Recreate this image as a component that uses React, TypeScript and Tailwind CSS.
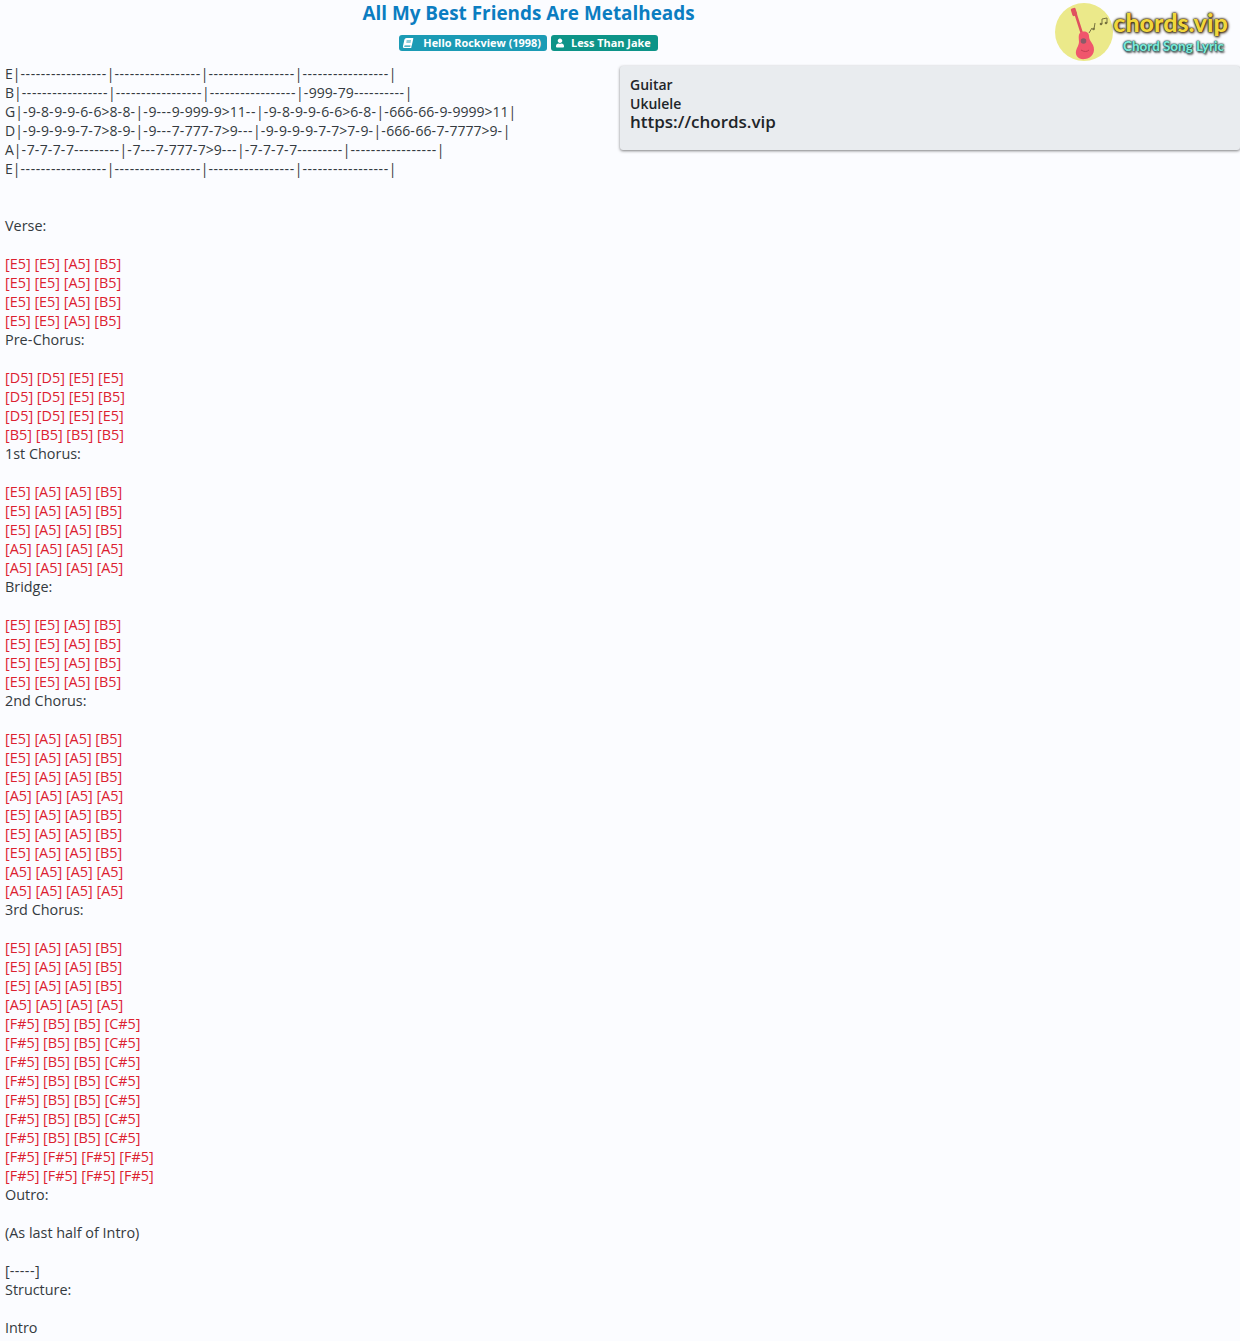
const tab = [
  "E|-----------------|-----------------|-----------------|-----------------|",
  "B|-----------------|-----------------|-----------------|-999-79----------|",
  "G|-9-8-9-9-6-6>8-8-|-9---9-999-9>11--|-9-8-9-9-6-6>6-8-|-666-66-9-9999>11|",
  "D|-9-9-9-9-7-7>8-9-|-9---7-777-7>9---|-9-9-9-9-7-7>7-9-|-666-66-7-7777>9-|",
  "A|-7-7-7-7---------|-7---7-777-7>9---|-7-7-7-7---------|-----------------|",
  "E|-----------------|-----------------|-----------------|-----------------|",
];

const lines = [
  "",
  "",
  "Verse:",
  "",
  "[E5] [E5] [A5] [B5]",
  "[E5] [E5] [A5] [B5]",
  "[E5] [E5] [A5] [B5]",
  "[E5] [E5] [A5] [B5]",
  "Pre-Chorus:",
  "",
  "[D5] [D5] [E5] [E5]",
  "[D5] [D5] [E5] [B5]",
  "[D5] [D5] [E5] [E5]",
  "[B5] [B5] [B5] [B5]",
  "1st Chorus:",
  "",
  "[E5] [A5] [A5] [B5]",
  "[E5] [A5] [A5] [B5]",
  "[E5] [A5] [A5] [B5]",
  "[A5] [A5] [A5] [A5]",
  "[A5] [A5] [A5] [A5]",
  "Bridge:",
  "",
  "[E5] [E5] [A5] [B5]",
  "[E5] [E5] [A5] [B5]",
  "[E5] [E5] [A5] [B5]",
  "[E5] [E5] [A5] [B5]",
  "2nd Chorus:",
  "",
  "[E5] [A5] [A5] [B5]",
  "[E5] [A5] [A5] [B5]",
  "[E5] [A5] [A5] [B5]",
  "[A5] [A5] [A5] [A5]",
  "[E5] [A5] [A5] [B5]",
  "[E5] [A5] [A5] [B5]",
  "[E5] [A5] [A5] [B5]",
  "[A5] [A5] [A5] [A5]",
  "[A5] [A5] [A5] [A5]",
  "3rd Chorus:",
  "",
  "[E5] [A5] [A5] [B5]",
  "[E5] [A5] [A5] [B5]",
  "[E5] [A5] [A5] [B5]",
  "[A5] [A5] [A5] [A5]",
  "[F#5] [B5] [B5] [C#5]",
  "[F#5] [B5] [B5] [C#5]",
  "[F#5] [B5] [B5] [C#5]",
  "[F#5] [B5] [B5] [C#5]",
  "[F#5] [B5] [B5] [C#5]",
  "[F#5] [B5] [B5] [C#5]",
  "[F#5] [B5] [B5] [C#5]",
  "[F#5] [F#5] [F#5] [F#5]",
  "[F#5] [F#5] [F#5] [F#5]",
  "Outro:",
  "",
  "(As last half of Intro)",
  "",
  "[-----]",
  "Structure:",
  "",
  "Intro",
];

const isChord = (line: string) => /^\[[A-G]/.test(line);

function Logo() {
  return (
    <div className="flex w-[175px] shrink-0 items-center">
      <svg width="58" height="58" viewBox="0 0 58 58" className="shrink-0">
        <circle cx="29" cy="29" r="29" fill="#ebe98a" />
        <path d="M20 9 L28 34" stroke="#e0505f" strokeWidth="2.500" strokeLinecap="round" />
        <rect x="16.500" y="5" width="5" height="8" rx="1.500" fill="#e0505f" transform="rotate(-17 19 9)" />
        <path d="M25 30 C29 27 34 29 34 33 C34 37 36 38 38 42 C41 49 37 55 30 56 C24 57 20 53 21 48 C22 44 24 42 24 39 C24 36 23 32 25 30 Z" fill="#f0566c" />
        <circle cx="28.500" cy="38" r="2.800" fill="#8a5a68" />
        <path d="M26 47 C29 49 32 49 34 47" stroke="#c23f55" strokeWidth="1" fill="none" />
        <path d="M34 30 L37 25 M39 26 L40 20 M47 21 L47 16 L52 15 L52 20" stroke="#77733f" strokeWidth="1" fill="none" />
        <circle cx="38.500" cy="26" r="1.300" fill="#77733f" />
        <circle cx="46" cy="21" r="1.300" fill="#77733f" />
        <circle cx="51" cy="20" r="1.300" fill="#77733f" />
      </svg>
      <div className="-mt-[3px] flex w-[117px] flex-col items-center whitespace-nowrap">
        <span className="-ml-[2px] font-['Lato',sans-serif] text-[25px] leading-[30px] font-black text-[#f0d63c] [text-shadow:0_0_1px_#3a2c14,0_0_2px_#3a2c14,0_0_3px_#3a2c14,1px_1px_3px_#3a2c14]">
          chords.vip
        </span>
        <span className="ml-[4px] font-['Lato',sans-serif] text-[13.400px] leading-[18px] font-black text-[#7be8d8] [text-shadow:0_0_1px_#1f4a4a,0_0_2px_#1f4a4a,0_0_2px_#1f4a4a,1px_2px_2px_#555]">
          Chord Song Lyric
        </span>
      </div>
    </div>
  );
}

function Line({ text }: { text: string }) {
  return (
    <div className={`h-[19px] whitespace-pre ${isChord(text) ? "text-[#dc2030]" : ""}`}>
      {text.split(/(-+)/).map((part, i) =>
        part.startsWith("-") ? (
          <span key={i} className="tracking-[0.42px]">
            {part}
          </span>
        ) : (
          part
        ),
      )}
    </div>
  );
}

function TabLine({ text }: { text: string }) {
  return (
    <div className="h-[19px] text-[14px] whitespace-pre">
      {text.split(/(-+)/).map((part, i) =>
        part.startsWith("-") ? (
          <span key={i} className="tracking-[0.57px]">
            {part}
          </span>
        ) : (
          part
        ),
      )}
    </div>
  );
}

export default function App() {
  return (
    <div className="min-h-[1341px] bg-[#fbfcff] font-['Open_Sans',sans-serif] text-[14.400px] leading-[19px] text-[#343a40]">
      <header className="flex h-[64px]">
        <div className="flex flex-1 flex-col items-center pl-[2px]">
          <h1 className="mt-[1px] text-[18.900px] leading-[24px] font-bold text-[#0b7dc1]">
            All My Best Friends Are Metalheads
          </h1>
          <div className="mt-[10px] flex gap-[4px] text-[10.900px] leading-[16px] font-bold text-white">
            <span className="flex items-center rounded-[3px] bg-[#1b9bb5] pr-[6px] pl-[4px]">
              <svg width="10" height="10" viewBox="0 0 448 512" fill="currentColor" className="mr-[10px] -skew-x-12">
                <path d="M448 360V24c0-13.300-10.700-24-24-24H96C43 0 0 43 0 96v320c0 53 43 96 96 96h328c13.300 0 24-10.700 24-24v-16c0-7.500-3.500-14.300-8.900-18.700-4.200-15.400-4.200-59.300 0-74.700 5.400-4.300 8.900-11.100 8.900-18.600zM128 134c0-3.300 2.700-6 6-6h212c3.300 0 6 2.700 6 6v20c0 3.300-2.700 6-6 6H134c-3.300 0-6-2.700-6-6v-20zm0 64c0-3.300 2.700-6 6-6h212c3.300 0 6 2.700 6 6v20c0 3.300-2.700 6-6 6H134c-3.300 0-6-2.700-6-6v-20zm253.400 250H96c-17.700 0-32-14.300-32-32 0-17.600 14.400-32 32-32h285.400c-1.900 17.100-1.900 46.900 0 64z" />
              </svg>
              Hello Rockview (1998)
            </span>
            <span className="flex items-center rounded-[3px] bg-[#0d9488] pr-[7px] pl-[5px]">
              <svg width="8" height="10" viewBox="0 0 448 512" fill="currentColor" className="mr-[7px]">
                <path d="M224 256c70.700 0 128-57.300 128-128S294.700 0 224 0 96 57.300 96 128s57.300 128 128 128zm89.600 32h-16.700c-22.200 10.200-46.900 16-72.900 16s-50.600-5.800-72.900-16h-16.700C60.200 288 0 348.200 0 422.400V464c0 26.500 21.500 48 48 48h352c26.500 0 48-21.500 48-48v-41.600c0-74.200-60.200-134.400-134.400-134.400z" />
              </svg>
              Less Than Jake
            </span>
          </div>
        </div>
        <div className="mr-[10px] pt-[3px]">
          <Logo />
        </div>
      </header>
      <main className="flex items-start">
        <div className="w-[620px] shrink-0 pl-[5px]">
          {tab.map((line, i) => (
            <TabLine key={i} text={line} />
          ))}
          {lines.map((line, i) => (
            <Line key={i} text={line} />
          ))}
        </div>
        <aside className="mt-[2px] h-[84px] flex-1 rounded-[3px] bg-[#e9ecef] px-[10px] pt-[9px] text-[14px] font-semibold text-[#212529] shadow-[0_1px_3px_rgba(0,0,0,0.5)]">
          <div>Guitar</div>
          <div>Ukulele</div>
          <div className="text-[17px] leading-[18px]">https://chords.vip</div>
        </aside>
      </main>
    </div>
  );
}
